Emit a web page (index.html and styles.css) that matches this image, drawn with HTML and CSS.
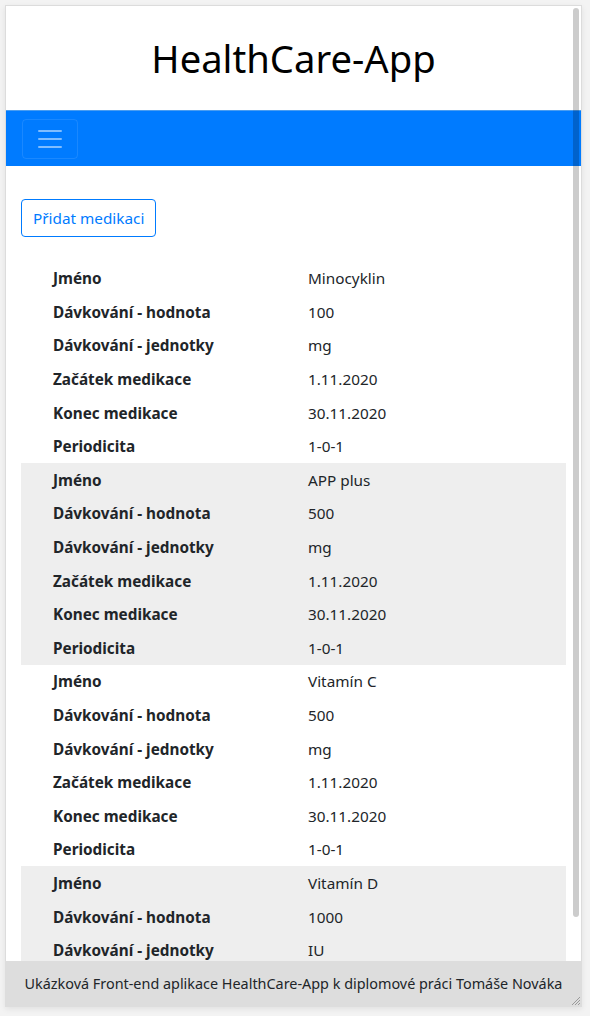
FILE: index.html
```html
<!DOCTYPE html>
<html lang="cs">
<head>
<meta charset="utf-8">
<title>HealthCare-App</title>
<link rel="stylesheet" href="styles.css">
</head>
<body>
<div class="frame">
  <div class="viewport">
    <header class="header"><h1 class="title">HealthCare-App</h1></header>
    <nav class="navbar">
      <button class="toggler" type="button" aria-label="Menu">
        <svg class="toggler-icon" viewBox="0 0 30 30" width="30" height="30"><path d="M4 7h22M4 15h22M4 23h22" stroke="rgba(255,255,255,0.5)" stroke-width="2" stroke-linecap="round"/></svg>
      </button>
    </nav>
    <main class="container">
      <button class="btn-outline" type="button">Přidat medikaci</button>
      <div class="meds">
        <dl class="med">
          <dt>Jméno</dt><dd>Minocyklin</dd>
          <dt>Dávkování - hodnota</dt><dd>100</dd>
          <dt>Dávkování - jednotky</dt><dd>mg</dd>
          <dt>Začátek medikace</dt><dd>1.11.2020</dd>
          <dt>Konec medikace</dt><dd>30.11.2020</dd>
          <dt>Periodicita</dt><dd>1-0-1</dd>
        </dl>
        <dl class="med">
          <dt>Jméno</dt><dd>APP plus</dd>
          <dt>Dávkování - hodnota</dt><dd>500</dd>
          <dt>Dávkování - jednotky</dt><dd>mg</dd>
          <dt>Začátek medikace</dt><dd>1.11.2020</dd>
          <dt>Konec medikace</dt><dd>30.11.2020</dd>
          <dt>Periodicita</dt><dd>1-0-1</dd>
        </dl>
        <dl class="med">
          <dt>Jméno</dt><dd>Vitamín C</dd>
          <dt>Dávkování - hodnota</dt><dd>500</dd>
          <dt>Dávkování - jednotky</dt><dd>mg</dd>
          <dt>Začátek medikace</dt><dd>1.11.2020</dd>
          <dt>Konec medikace</dt><dd>30.11.2020</dd>
          <dt>Periodicita</dt><dd>1-0-1</dd>
        </dl>
        <dl class="med">
          <dt>Jméno</dt><dd>Vitamín D</dd>
          <dt>Dávkování - hodnota</dt><dd>1000</dd>
          <dt>Dávkování - jednotky</dt><dd>IU</dd>
          <dt>Začátek medikace</dt><dd>1.11.2020</dd>
          <dt>Konec medikace</dt><dd>30.11.2020</dd>
          <dt>Periodicita</dt><dd>1-0-1</dd>
        </dl>
      </div>
    </main>
  </div>
  <div class="scroll-thumb"></div>
  <footer class="footer">
    <span class="footer-text">Ukázková Front-end aplikace HealthCare-App k diplomové práci Tomáše Nováka</span>
    <svg class="grip" width="11" height="11" viewBox="0 0 11 11"><path d="M10 2L2 10M10 5L5 10M10 8L8 10" stroke="#9a9a9a" stroke-width="1"/></svg>
  </footer>
</div>
</body>
</html>
```
FILE: styles.css
```css
* { box-sizing: border-box; }
html, body { margin: 0; padding: 0; }
body {
  background: #f3f3f3;
  font-family: "Noto Sans", "Segoe UI", sans-serif;
  color: #212529;
  font-size: 15.3px;
  line-height: 24px;
  height: 1016px;
  overflow: hidden;
}
.frame {
  position: relative;
  margin: 5px 8px 0 5px;
  height: 1002px;
  border: 1px solid #dcdcdc;
  border-bottom: none;
  background: #fff;
  box-shadow: 0 2px 6px rgba(0,0,0,0.08);
}
.viewport {
  height: 955px;
  overflow: hidden;
}
.header {
  height: 104px;
  display: flex;
  align-items: center;
  justify-content: center;
}
.title {
  margin: 0;
  font-weight: 400;
  font-size: 38.2px;
  line-height: 48px;
  color: #000;
}
.navbar {
  background: #007bff;
  padding: 8px 16px;
  height: 56px;
  display: flex;
  align-items: center;
  border-top: 1px solid #4a9df0;
}
.toggler {
  width: 56px;
  height: 40px;
  padding: 0;
  background: transparent;
  border: 1px solid rgba(255,255,255,0.1);
  border-radius: 4px;
  display: flex;
  align-items: center;
  justify-content: center;
}
.container {
  padding: 33px 15px 0;
}
.btn-outline {
  display: block;
  font: inherit;
  color: #007bff;
  background: #fff;
  border: 1px solid #007bff;
  border-radius: 4px;
  padding: 6px 11px;
  line-height: 24px;
  height: 38px;
}
.meds { margin-top: 24.5px; }
.med {
  margin: 0;
  display: grid;
  grid-template-columns: 287px 1fr;
}
.med:nth-child(even) { background: #eeeeee; }
.med dt, .med dd {
  margin: 0;
  padding: 4.8px 0;
  line-height: 24px;
}
.med dt { font-weight: 700; padding-left: 32px; color: #212529; }
.med dd { color: #212529; }
.scroll-thumb {
  position: absolute;
  top: 2px;
  right: 2px;
  width: 6px;
  height: 909px;
  border-radius: 3px;
  background: rgba(0,0,0,0.2);
}
.footer {
  position: absolute;
  left: -1px;
  right: -1px;
  bottom: 0;
  height: 46px;
  background: #dddddd;
  display: flex;
  align-items: center;
  justify-content: center;
  color: #212529;
}
.footer-text {
  white-space: nowrap;
  font-size: 14.4px;
}
.grip {
  position: absolute;
  right: 1px;
  bottom: 1px;
}
```
